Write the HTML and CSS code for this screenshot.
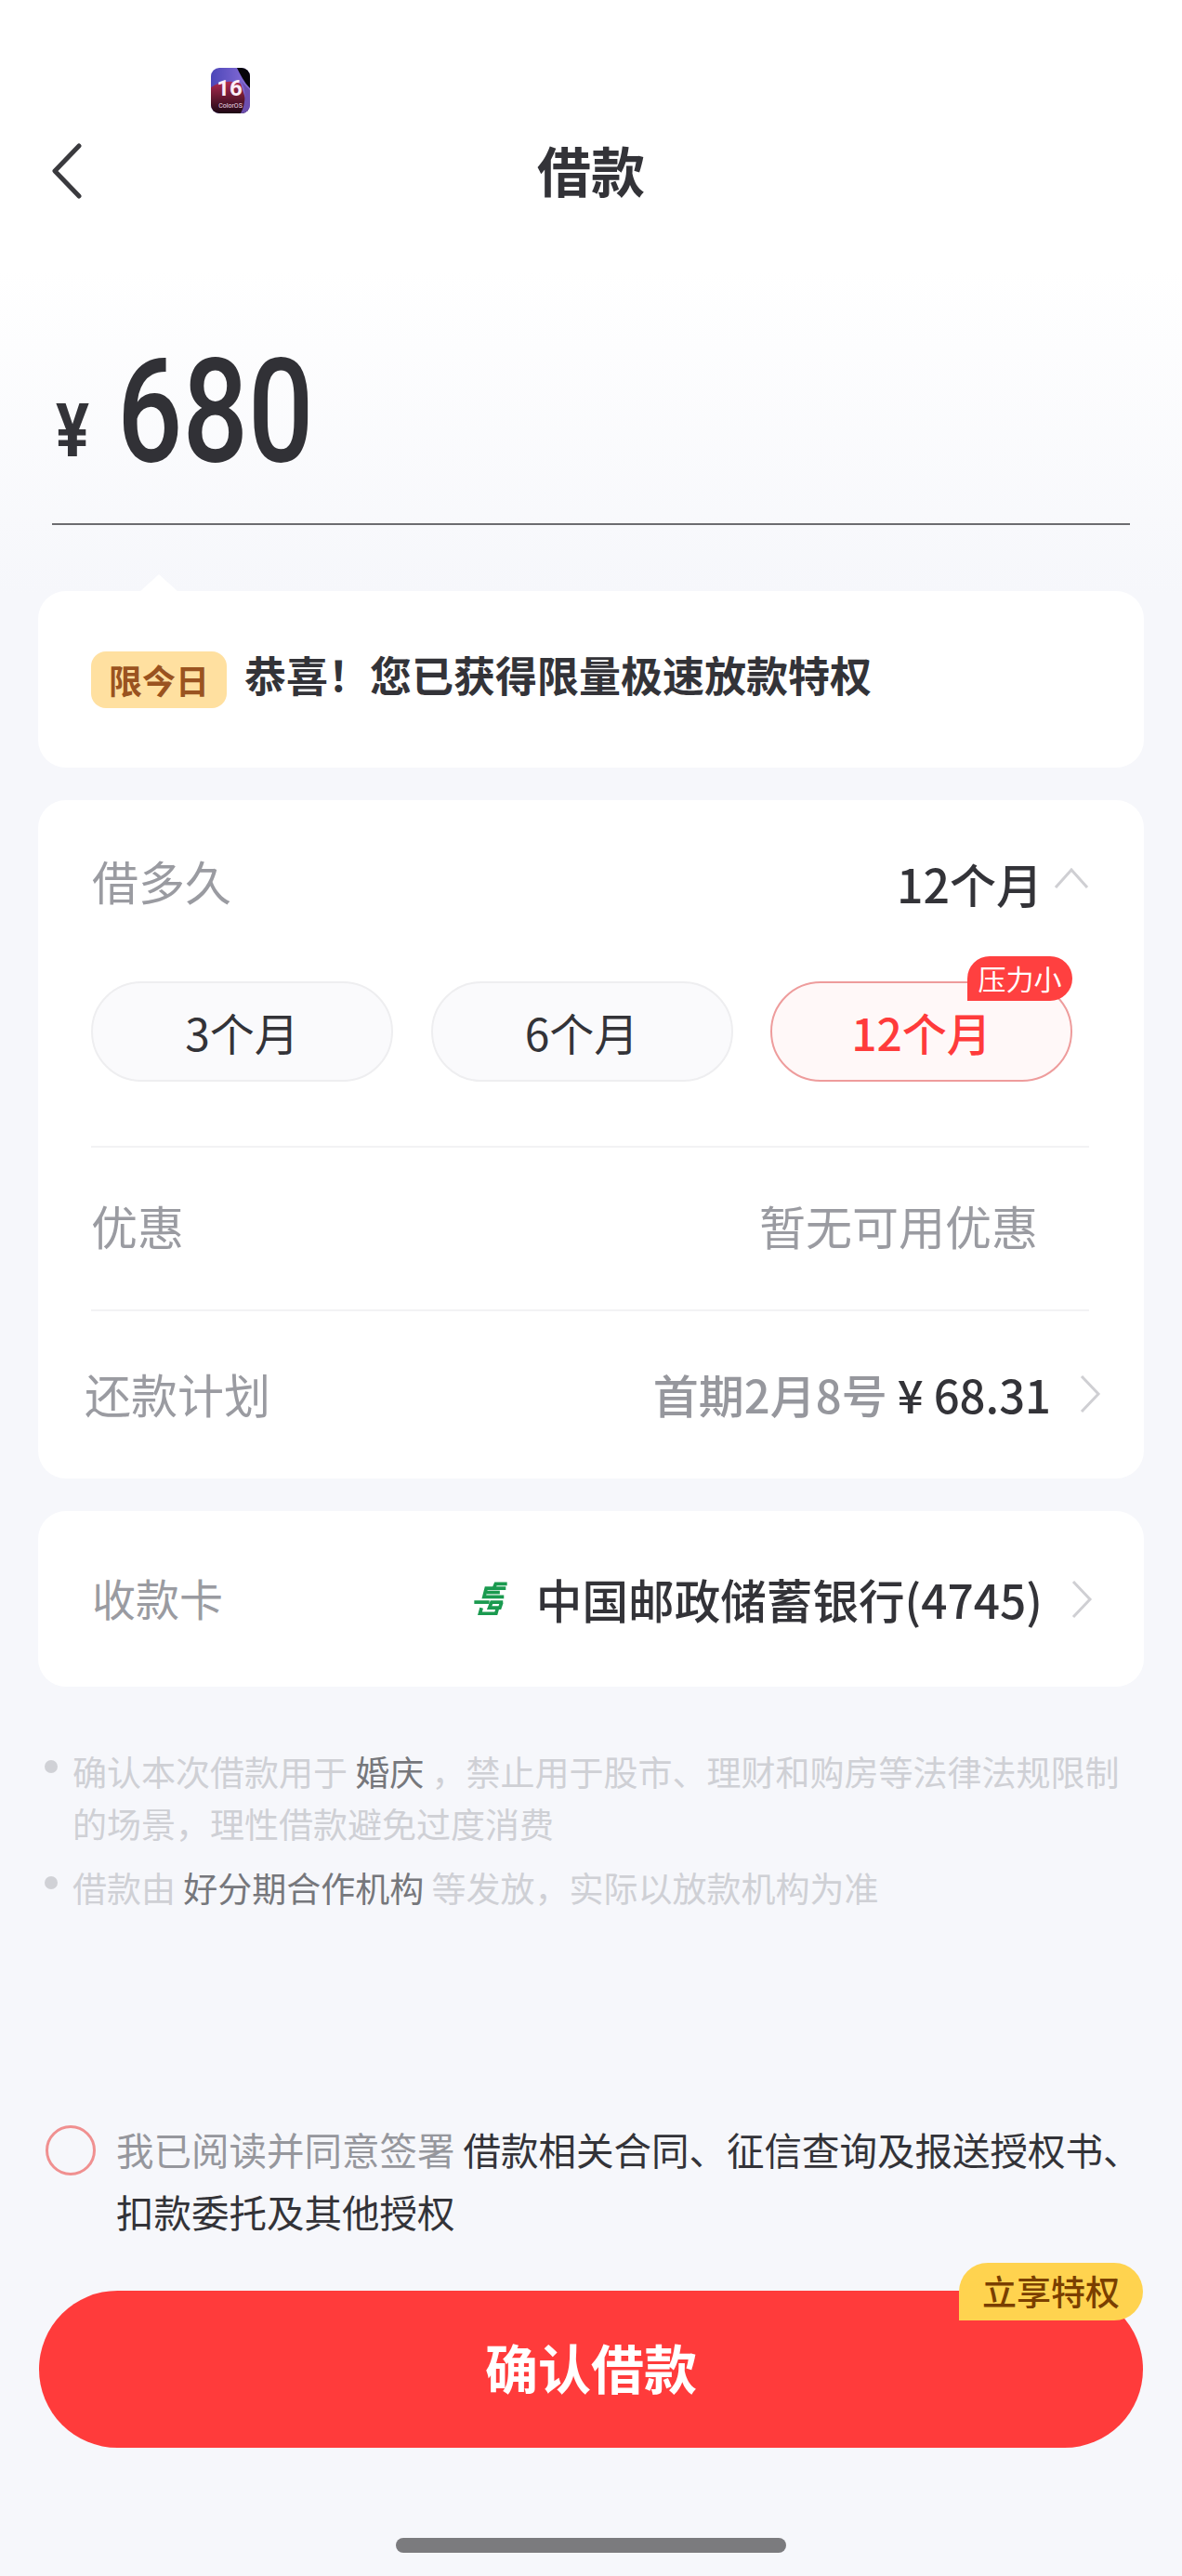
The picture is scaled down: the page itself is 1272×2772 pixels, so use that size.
FILE: index.html
```html
<!DOCTYPE html>
<html lang="zh-CN">
<head>
<meta charset="utf-8">
<title>借款</title>
<link rel="stylesheet" href="styles.css">
</head>
<body>
<div class="page">
  <div class="status">
    <svg class="os-icon" viewBox="0 0 42 49" width="42" height="49">
      <defs>
        <linearGradient id="osSky" x1="0" y1="0" x2="1" y2="0"><stop offset="0" stop-color="#4b46b8"/><stop offset="1" stop-color="#8a6fd8"/></linearGradient>
        <linearGradient id="osLow" x1="0" y1="0" x2="0" y2="1"><stop offset="0" stop-color="#b02a50"/><stop offset="1" stop-color="#1d0714"/></linearGradient>
        <clipPath id="osClip"><rect width="42" height="49" rx="9"/></clipPath>
      </defs>
      <g clip-path="url(#osClip)">
        <rect width="42" height="49" fill="url(#osSky)"/>
        <path d="M0 21C10 14 22 13 32 17L42 49H0Z" fill="url(#osLow)"/>
        <path d="M28 0H42V22C36 16 32 8 28 0Z" fill="#06040a"/>
        <path d="M32 49C38 38 38 22 32 14L42 24V49Z" fill="#6d4fb0"/>
        <text x="20" y="30" class="os-num">16</text>
        <text x="21" y="43" class="os-name">ColorOS</text>
      </g>
    </svg>
  </div>

  <header class="nav">
    <svg class="back" viewBox="0 0 34 60" width="34" height="60"><path d="M30 3 4 30l26 27" /></svg>
    <h1 class="title">借款</h1>
  </header>

  <section class="amount">
    <span class="currency">¥</span>
    <span class="value">680</span>
  </section>

  <section class="card promo">
    <span class="promo-tag">限今日</span>
    <span class="promo-text">恭喜！您已获得限量极速放款特权</span>
  </section>

  <section class="card terms">
    <div class="row row-term">
      <span class="label">借多久</span>
      <span class="term-now">12个月</span>
      <svg class="chev-up" viewBox="0 0 38 24" width="38" height="24"><path d="M2 22 19 3l17 19"/></svg>
    </div>
    <div class="pills">
      <div class="pill">3个月</div>
      <div class="pill">6个月</div>
      <div class="pill pill-on">12个月<span class="pill-tag">压力小</span></div>
    </div>
    <div class="row row-coupon">
      <span class="label">优惠</span>
      <span class="muted">暂无可用优惠</span>
    </div>
    <div class="row row-plan">
      <span class="label plan-label">还款计划</span>
      <span class="plan-value"><span class="plan-date">首期2月8号</span> <span class="plan-money">¥ 68.31</span></span>
      <svg class="chev" viewBox="0 0 24 42" width="24" height="42"><path d="M3 2l18 19L3 40"/></svg>
    </div>
  </section>

  <section class="card bank">
    <span class="label bank-label">收款卡</span>
    <svg class="bank-logo" viewBox="88 100 106 106" width="36" height="36">
      <g class="bank-mark">
        <path d="M193 107H157L151 121H127L120 148H183"/>
        <path d="M189 121H151"/>
        <path d="M127 134H170"/>
        <path d="M89 165H137"/>
        <path d="M180 165H144L137 183H170L176 165"/>
        <path d="M112 183L107 201H158L163 183"/>
      </g>
    </svg>
    <span class="bank-name">中国邮政储蓄银行(4745)</span>
    <svg class="chev" viewBox="0 0 24 42" width="24" height="42"><path d="M3 2l18 19L3 40"/></svg>
  </section>

  <section class="notes">
    <p class="note"><span class="note-text">确认本次借款用于 <em>婚庆</em> ，禁止用于股市、理财和购房等法律法规限制的场景，理性借款避免过度消费</span></p>
    <p class="note"><span class="note-text">借款由 <em>好分期合作机构</em> 等发放，实际以放款机构为准</span></p>
  </section>

  <section class="agree">
    <span class="radio"></span>
    <p class="agree-text"><span class="agree-grey">我已阅读并同意签署</span> 借款相关合同、征信查询及报送授权书、扣款委托及其他授权</p>
  </section>

  <div class="cta">
    确认借款
    <span class="cta-tag">立享特权</span>
  </div>

  <div class="home-bar"></div>
</div>
</body>
</html>
```
FILE: styles.css
```css
* { box-sizing: border-box; }
html, body { margin: 0; padding: 0; }
body { font-family: "Noto Sans CJK SC", "Noto Sans", sans-serif; color: #333338; }
p, h1 { margin: 0; }
.page {
  width: 1272px; height: 2772px; overflow: hidden;
  display: flex; flex-direction: column;
  background: linear-gradient(#ffffff 0, #ffffff 290px, #f6f7fb 640px);
}
.status { height: 150px; padding: 73px 0 0 227px; }
.os-icon { display: block; }
.os-num { font: 700 24px "Roboto", sans-serif; fill: #fbeef8; text-anchor: middle; }
.os-name { font: 400 7px "Roboto", sans-serif; fill: #f0dce8; text-anchor: middle; }
.nav { height: 68px; position: relative; display: flex; justify-content: center; align-items: center; }
.back { position: absolute; left: 55px; top: 4px; fill: none; stroke: #3a3a3e; stroke-width: 5; stroke-linecap: round; stroke-linejoin: round; }
.title { font-size: 58px; line-height: 68px; font-weight: 700; color: #333338; margin-top: -4px; }
.amount {
  margin: 0 56px; height: 347px; padding-top: 160px;
  display: flex; align-items: flex-start; gap: 26px;
  border-bottom: 2px solid #6c6c70;
}
.currency { font: 700 80px/60px "Roboto", sans-serif; margin-top: 56px; margin-left: 4px; width: 40px; transform: scaleX(.84); transform-origin: 0 50%; }
.value { font: 500 155px/130px "Roboto", sans-serif; color: #313136; transform: scaleX(.8); transform-origin: 0 0; }
.card { margin: 0 41px; background: #fff; border-radius: 30px; position: relative; }
.promo {
  margin-top: 71px; height: 190px;
  display: flex; align-items: center; padding: 0 57px; gap: 19px;
}
.promo::before {
  content: ""; position: absolute; left: 110px; top: -18px; width: 0; height: 0;
  border: 20px solid transparent; border-top: 0; border-bottom: 18px solid #fff;
}
.promo-tag {
  width: 146px; height: 61px; border-radius: 16px; background: #ffe0a0; color: #9a5320;
  font-size: 36px; line-height: 60px; font-weight: 700; text-align: center;
}
.promo-text { font-size: 45px; line-height: 60px; font-weight: 700; margin-top: -11px; color: #333338; }
.terms { margin-top: 35px; height: 730px; padding: 0 58px; }
.row { display: flex; align-items: center; }
.label { font-size: 50px; line-height: 70px; color: #9a9ba1; }
.row-term { padding-top: 54px; height: 124px; }
.row-term .label { margin-top: -6px; }
.term-now { margin-left: auto; font-size: 50px; line-height: 70px; font-weight: 500; color: #333338; }
.chev-up { margin-left: 12px; margin-right: 1px; margin-top: -10px; fill: none; stroke: #cfcfd3; stroke-width: 3; }
.pills { margin-top: 71px; display: flex; justify-content: space-between; width: 1056px; margin-left: -1px; }
.pill {
  width: 325px; height: 108px; border-radius: 54px; background: #fafafc; border: 2px solid #eeeef0;
  font-size: 48px; line-height: 104px; text-align: center; position: relative; color: #333338;
}
.pill-on { background: #fff8f8; border-color: #ee9c9c; color: #ff3b3b; font-weight: 500; }
.pill-tag {
  position: absolute; right: -2px; top: -29px; width: 113px; height: 48px;
  border-radius: 24px 24px 24px 0; background: #ff4040; color: #fff;
  font-size: 30px; line-height: 46px; font-weight: 400; text-align: center;
}
.row-coupon {
  margin-top: 69px; height: 178px; justify-content: space-between;
  border-top: 2px solid #f2f2f4; border-bottom: 2px solid #f2f2f4; padding: 0 0 9px 0;
  width: 1074px; margin-left: -1px;
}
.muted { font-size: 50px; line-height: 70px; color: #9a9ba1; margin-right: 55px; }
.row-plan { height: 180px; position: relative; }
.plan-label { margin-left: -8px; margin-top: -5px; }
.plan-value { margin-left: auto; font-size: 49px; line-height: 70px; font-weight: 500; white-space: nowrap; margin-top: -3px; }
.plan-date { color: #96979d; }
.plan-money { color: #333338; }
.chev { fill: none; stroke: #cfcfd3; stroke-width: 3; flex: none; }
.row-plan .chev { margin-left: 30px; margin-right: -12px; margin-top: -2px; }
.bank { margin-top: 35px; height: 189px; padding: 0 55px 0 58px; display: flex; align-items: center; }
.bank-label { font-size: 47px; margin-top: -3px; }
.bank-logo { margin-left: auto; margin-top: -1px; }
.bank-mark { fill: none; stroke: #1a9a4f; stroke-width: 11; }
.bank-name { font-size: 49.6px; line-height: 70px; font-weight: 500; margin-left: 31px; margin-right: 30px; white-space: nowrap; margin-top: -2px; }
.notes { margin: 63px 66px 0 48px; display: flex; flex-direction: column; gap: 13px; }
.note { display: flex; gap: 16px; font-size: 37px; line-height: 56px; color: #cfd0d5; }
.note::before { content: ""; flex: none; width: 14px; height: 14px; border-radius: 50%; background: #d0d1d6; margin-top: 16px; }
.note-text { flex: 1; }
.note em { font-style: normal; color: #76777c; }
.agree { margin: 225px 40px 0 49px; display: flex; gap: 22px; }
.radio { flex: none; width: 54px; height: 54px; border-radius: 50%; border: 3px solid #f09090; margin-top: 3px; }
.agree-text { font-size: 40.5px; line-height: 67px; color: #333338; margin-top: -5px; }
.agree-grey { color: #96979d; }
.cta {
  position: relative; margin: 52px 42px 0; height: 169px; border-radius: 85px;
  background: #ff3b3b; color: #fff; font-size: 57px; line-height: 163px; font-weight: 700; text-align: center;
}
.cta-tag {
  position: absolute; right: 0; top: -30px; width: 198px; height: 62px;
  border-radius: 31px 31px 31px 0; background: #ffd34f; color: #7a3f00;
  font-size: 37px; line-height: 60px; font-weight: 500; text-align: center;
}
.home-bar { width: 420px; height: 16px; border-radius: 8px; background: #7b7b7e; margin: 97px auto 0; }
```
